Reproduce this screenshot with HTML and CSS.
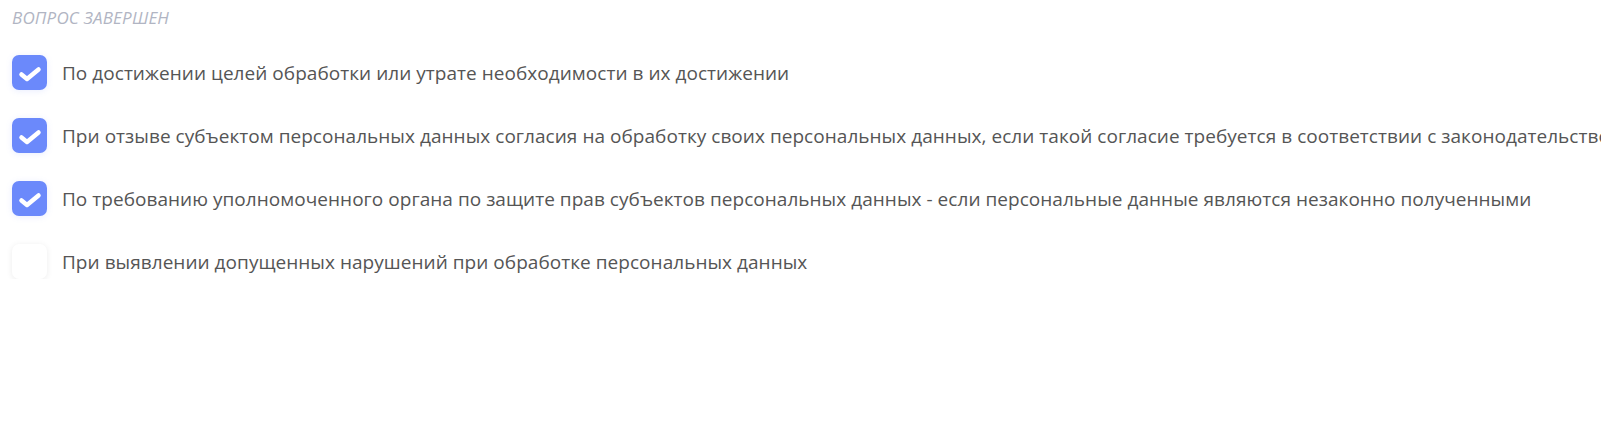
FILE: index.html
```html
<!DOCTYPE html>
<html lang="ru">
<head>
<meta charset="utf-8">
<link rel="stylesheet" href="styles.css">
</head>
<body>
<div class="question">
  <div class="status">Вопрос завершен</div>
  <ul class="options">
    <li class="option">
      <span class="box checked"><svg class="tick" viewBox="0 0 35 35" width="35" height="35"><path d="M9.5 19.5L15 24L26.5 14.5" /></svg></span>
      <span class="label">По достижении целей обработки или утрате необходимости в их достижении</span>
    </li>
    <li class="option">
      <span class="box checked"><svg class="tick" viewBox="0 0 35 35" width="35" height="35"><path d="M9.5 19.5L15 24L26.5 14.5" /></svg></span>
      <span class="label">При отзыве субъектом персональных данных согласия на обработку своих персональных данных, если такой согласие требуется в соответствии с законодательством</span>
    </li>
    <li class="option">
      <span class="box checked"><svg class="tick" viewBox="0 0 35 35" width="35" height="35"><path d="M9.5 19.5L15 24L26.5 14.5" /></svg></span>
      <span class="label">По требованию уполномоченного органа по защите прав субъектов персональных данных - если персональные данные являются незаконно полученными</span>
    </li>
    <li class="option">
      <span class="box"></span>
      <span class="label">При выявлении допущенных нарушений при обработке персональных данных</span>
    </li>
  </ul>
</div>
</body>
</html>
```
FILE: styles.css
```css
html, body {
  margin: 0;
  padding: 0;
  background: #fff;
  overflow: hidden;
}
body {
  font-family: "Open Sans", "Liberation Sans", sans-serif;
}
.question {
  padding: 8px 12px 0 12px;
}
.status {
  font-style: italic;
  text-transform: uppercase;
  font-size: 17px;
  letter-spacing: 0.2px;
  line-height: 20px;
  color: #b1b5c3;
}
.options {
  list-style: none;
  margin: 0;
  padding: 0;
  margin-top: 27px;
  display: flex;
  flex-direction: column;
  gap: 28px;
}
.option {
  display: flex;
  align-items: center;
  gap: 15px;
  white-space: nowrap;
}
.box {
  flex: none;
  width: 35px;
  height: 35px;
  border-radius: 7px;
  background: #fff;
  box-shadow: 0 1px 6px rgba(0, 0, 0, 0.08);
}
.box.checked {
  background: #6b89fb;
  box-shadow: 0 1px 6px rgba(107, 137, 251, 0.15);
}
.tick {
  display: block;
}
.tick path {
  fill: none;
  stroke: #fff;
  stroke-width: 4.5;
  stroke-linecap: round;
  stroke-linejoin: round;
}
.label {
  font-size: 19px;
  letter-spacing: 0.04px;
  color: #555;
  line-height: 26px;
}
```
